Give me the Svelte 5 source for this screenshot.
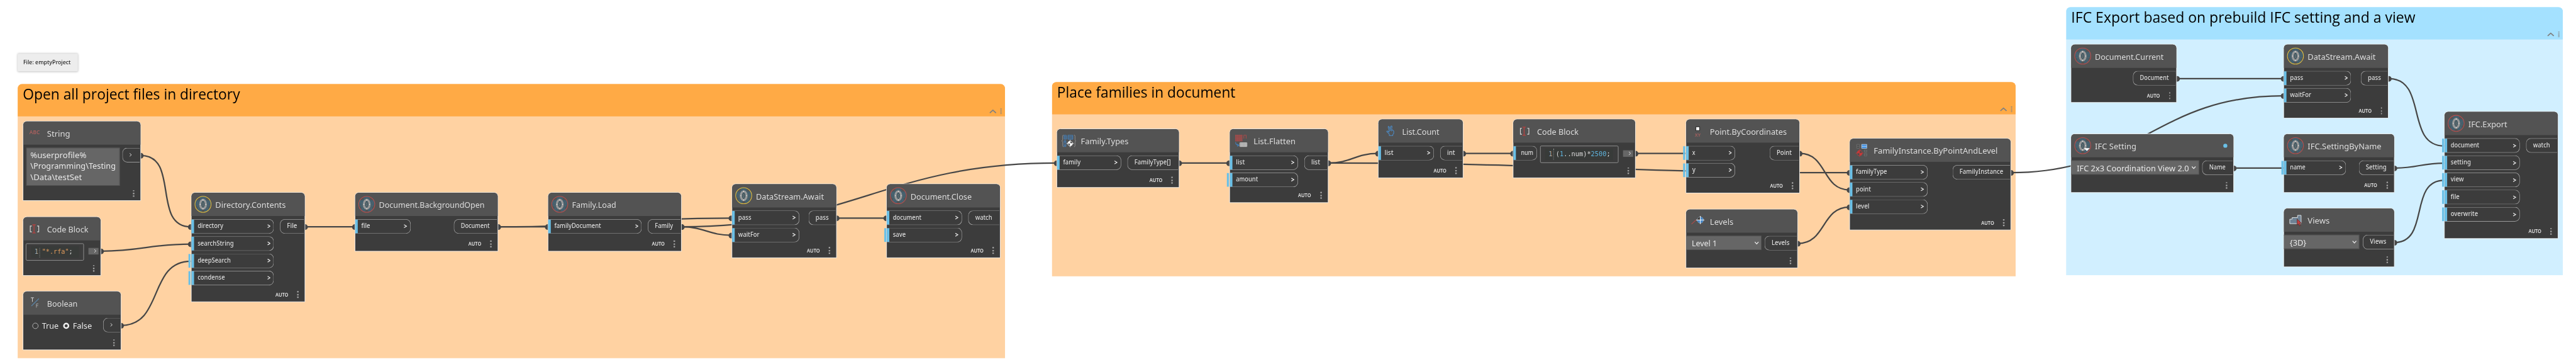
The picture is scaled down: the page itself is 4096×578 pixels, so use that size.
<script>
  // Canvas units; the stage is scaled down to the window.
  const P = (label, w, dflt = false) => ({ label, w, dflt });

  const notes = [{ x: 35, y: 105.5, w: 119, h: 35, text: 'File: emptyProject', tw: 94 }];

  const groups = [
    { x: 35, y: 166, w: 1954, h: 541.7, title: 'Open all project files in directory', tw: 430, kind: 'orange' },
    { x: 2082, y: 162, w: 1907, h: 383.7, title: 'Place families in document', tw: 353, kind: 'orange' },
    { x: 4089, y: 14, w: 983, h: 529.7, title: 'IFC Export based on prebuild IFC setting and a view', tw: 681, kind: 'blue' }
  ];

  const nodes = [
    { id: 'str', x: 44.5, y: 239.3, r: 278.6, h: 157.4, title: 'String', tw: 46, icon: 'abc', text: [['%userprofile%', 111], ['\\Programming\\Testing', 169], ['\\Data\\testSet', 102]], out: P('', 0), ox: 242 },
    { id: 'rfa', x: 44.5, y: 428.3, r: 200, h: 116.4, title: 'Code Block', tw: 82, icon: 'code', code: [['"*.rfa"', 'o'], [';', '']], cw: 115, ctw: 61 },
    { id: 'bool', x: 44.5, y: 575.3, r: 239.7, h: 116.4, title: 'Boolean', tw: 60.5, icon: 'tf', radio: true, out: P('', 0), ox: 203.5 },
    { id: 'dir', x: 377.5, y: 380.3, r: 603.7, h: 216.4, title: 'Directory.Contents', tw: 139.5, icon: 'orchid', ring: 'y', auto: true, ins: [P('directory', 51), P('searchString', 71.5), P('deepSearch', 65.5, true), P('condense', 54, true)], ir: 542, out: P('File', 20), ox: 554 },
    { id: 'bg', x: 702.3, y: 380.3, r: 985.8, h: 116.4, title: 'Document.BackgroundOpen', tw: 209, icon: 'orchid', ring: 'r', auto: true, ins: [P('file', 17.5)], ir: 813, out: P('Document', 57), ox: 898 },
    { id: 'load', x: 1084, y: 380.3, r: 1349.2, h: 116.4, title: 'Family.Load', tw: 87.5, icon: 'orchid', ring: 'r', auto: true, ins: [P('familyDocument', 92.5)], ir: 1270, out: P('Family', 36), ox: 1282 },
    { id: 'await1', x: 1447.5, y: 363, r: 1655.8, h: 146.7, title: 'DataStream.Await', tw: 134.5, icon: 'orchid', ring: 'y', auto: true, ins: [P('pass', 26), P('waitFor', 42)], ir: 1581.5, out: P('pass', 26), ox: 1600 },
    { id: 'close', x: 1754, y: 363, r: 1979.8, h: 146.7, title: 'Document.Close', tw: 121, icon: 'orchid', ring: 'r', auto: true, ins: [P('document', 56.5), P('save', 25.5, true)], ir: 1903.7, out: P('watch', 33.5), ox: 1916 },
    { id: 'types', x: 2091.3, y: 254.3, r: 2333.7, h: 116.4, title: 'Family.Types', tw: 94.5, icon: 'types', auto: true, ins: [P('family', 34.5)], ir: 2219, out: P('FamilyType[]', 72), ox: 2231 },
    { id: 'flat', x: 2432.5, y: 254.3, r: 2628.5, h: 146.4, title: 'List.Flatten', tw: 83, icon: 'flatten', auto: true, ins: [P('list', 17.5), P('amount', 43.5, true)], ir: 2568.8, out: P('list', 17.5), ox: 2581.3 },
    { id: 'count', x: 2727.2, y: 235.3, r: 2895.9, h: 116.4, title: 'List.Count', tw: 73.5, icon: 'count', auto: true, ins: [P('list', 17.5)], ir: 2838, out: P('int', 15.5), ox: 2850 },
    { id: 'num', x: 2994.3, y: 235.3, r: 3236.9, h: 116.4, title: 'Code Block', tw: 82, icon: 'code', ins: [P('num', 24.5)], bare: true, ir: 3042, code: [['(', ''], ['1', 'b'], ['..num)*', ''], ['2500', 'b'], [';', '']], cw: 155, ctw: 108 },
    { id: 'pt', x: 3335.5, y: 235.3, r: 3561.7, h: 146.4, title: 'Point.ByCoordinates', tw: 152, icon: 'point', auto: true, ins: [P('x', 6, true), P('y', 6.5, true)], ir: 3434, out: P('Point', 30), ox: 3502 },
    { id: 'lev', x: 3335.5, y: 413.3, r: 3557.9, h: 116.4, title: 'Levels', tw: 46.5, icon: 'levels', select: 'Level 1', sw: 50, ir: 3486, out: P('Levels', 35.5), ox: 3492 },
    { id: 'inst', x: 3660.3, y: 273.3, r: 3979.9, h: 181.4, title: 'FamilyInstance.ByPointAndLevel', tw: 245.5, icon: 'instance', auto: true, ins: [P('familyType', 61.5), P('point', 29.5), P('level', 26.5)], ir: 3814.7, out: P('FamilyInstance', 86.5), ox: 3864 },
    { id: 'cur', x: 4098.2, y: 87.3, r: 4308.5, h: 116.2, title: 'Document.Current', tw: 136, icon: 'orchid', ring: 'r', auto: true, out: P('Document', 57), ox: 4221 },
    { id: 'set', x: 4098.2, y: 264.3, r: 4420.7, h: 116.4, title: 'IFC Setting', tw: 82, icon: 'orchid', ring: 'r', drop: true, badge: true, select: 'IFC 2x3 Coordination View 2.0', sw: 222, ir: 4352, out: P('Name', 32.5), ox: 4358 },
    { id: 'await2', x: 4519.4, y: 87.3, r: 4727.5, h: 146.4, title: 'DataStream.Await', tw: 134.5, icon: 'orchid', ring: 'y', auto: true, ins: [P('pass', 26), P('waitFor', 42)], ir: 4653.5, out: P('pass', 26), ox: 4672 },
    { id: 'byname', x: 4519.4, y: 264.3, r: 4738.6, h: 116.4, title: 'IFC.SettingByName', tw: 146, icon: 'orchid', ring: 'r', auto: true, ins: [P('name', 30.5, true)], ir: 4643, out: P('Setting', 41), ox: 4668 },
    { id: 'views', x: 4519.4, y: 411.3, r: 4738.6, h: 116.4, title: 'Views', tw: 43.5, icon: 'views', select: '{3D}', sw: 33, ir: 4669.5, out: P('Views', 32.5), ox: 4676 },
    { id: 'exp', x: 4837, y: 220.4, r: 5062.6, h: 251.6, title: 'IFC.Export', tw: 77, icon: 'orchid', ring: 'r', auto: true, ins: [P('document', 56.5, true), P('setting', 40, true), P('view', 26, true), P('file', 17.5, true), P('overwrite', 54, true)], ir: 4986.5, out: P('watch', 33.5), ox: 4999 }
  ];

  const links = [
    ['str', 'dir', 0], ['rfa', 'dir', 1], ['bool', 'dir', 2], ['dir', 'bg', 0],
    ['bg', 'load', 0], ['bg', 'await1', 0], ['load', 'await1', 1], ['load', 'types', 0],
    ['await1', 'close', 0], ['types', 'flat', 0], ['flat', 'count', 0], ['flat', 'inst', 0],
    ['count', 'num', 0], ['num', 'pt', 0], ['pt', 'inst', 1], ['lev', 'inst', 2],
    ['inst', 'await2', 1], ['cur', 'await2', 0], ['set', 'byname', 0],
    ['await2', 'exp', 0], ['byname', 'exp', 1], ['views', 'exp', 2]
  ];

  const byId = Object.fromEntries(nodes.map((n) => [n.id, n]));
  const wires = links.map(([a, b, i]) => {
    const x1 = byId[a].r, y1 = byId[a].y + 68;
    const x2 = byId[b].x, y2 = byId[b].y + 68 + 34 * i;
    const o = 0.45 * Math.hypot(x2 - x1, y2 - y1);
    return { x1, y1, x2, y2, end: !byId[b].ins[i].dflt, d: `M${x1} ${y1}C${x1 + o} ${y1} ${x2 - o} ${y2} ${x2} ${y2}` };
  });

  // Stretches a label horizontally to the width reserved for it.
  function fit(el, w) {
    const natural = parseFloat(getComputedStyle(el).width);
    if (natural > 0) el.style.transform = `scaleX(${w / natural})`;
  }
</script>

{#snippet label(text, w, cls)}
  <span class="label {cls}" style:width="{w}px"><span class="ink" use:fit={w}>{text}</span></span>
{/snippet}

{#snippet gt(w, sw)}
  <svg class="gt" width={w} height="8" viewBox="0 0 {w} 8"><path d="M.6 1L{w - 0.9} 4L.6 7" fill="none" stroke="#e8e8e8" stroke-width={sw} /></svg>
{/snippet}

{#snippet more()}
  <span class="more"><i></i><i></i><i></i></span>
{/snippet}

{#snippet icon(n)}
  <svg class="icon" width="47" height="46" viewBox="1 1 47 46">
    {#if n.icon === 'orchid'}
      <g transform="translate(23.8 23.8)">
        <g fill="#43606f">
          <path d="M-5.5-14.5Q0-17.5 5.5-14.5L7-5L0 0L-7-5Z" />
          <path d="M-15-8L-6-8L-2 1L-9 8Q-17 2-15-8Z" />
          <path d="M15-8L6-8L2 1L9 8Q17 2 15-8Z" />
          <path d="M-10 5L0 1L-3 15Q-11 14-12 9Z" />
          <path d="M10 5L0 1L3 15Q11 14 12 9Z" />
        </g>
        <path d="M-15-8L0 11L15-8M-10 12L0-13L10 12M-14 3L14 3" fill="none" stroke="#6b6663" stroke-width=".6" />
        <ellipse rx="5.6" ry="8.7" fill="#415862" stroke="#999" stroke-width="4" />
        <path d="M-1.8-4L1.5 0L-1.8 5M1.8-4L-1.5 0L1.8 5" fill="none" stroke="#8b8784" stroke-width=".6" />
        <g fill="#fff"><rect x="-.5" y="-9.8" width="1" height="2.4" /><rect x="-.5" y="7.4" width="1" height="2.4" /><rect x="-6.4" y="-.6" width="1.5" height="1.2" /><rect x="4.9" y="-.6" width="1.5" height="1.2" /></g>
        <circle r="15.9" fill="none" stroke={n.ring === 'y' ? '#e3bf3f' : '#b94e4c'} stroke-width="1.3" />
      </g>
      {#if n.drop}<path d="M26 28.8H38L32 34.4Z" fill="#fff" />{/if}
    {:else if n.icon === 'abc'}
      <text x="13.3" y="26.6" font-size="11.2" font-weight="600" textLength="20.4" lengthAdjust="spacingAndGlyphs" fill="#a9605e">ABC</text>
    {:else if n.icon === 'code'}
      <path d="M18 18.6H14.9V30.2H18M28.6 18.6H31.7V30.2H28.6" fill="none" stroke="#ddd" stroke-width="1.4" />
      <path d="M19 16.3H25.6M19 32.4H25.6M22.3 16.3V32.4" fill="none" stroke="#b6413f" stroke-width="1.7" />
    {:else if n.icon === 'tf'}
      <path d="M16 13.5H22.2M19.1 13.5V21.5" fill="none" stroke="#ddd" stroke-width="1.1" />
      <path d="M17.2 29.8L32 15" stroke="#5b8db8" stroke-width="1.3" />
      <path d="M27 33V25.6H31M27 29H30.4" fill="none" stroke="#aaa" stroke-width="1.1" />
    {:else if n.icon === 'types'}
      <path d="M14 12.9Q12 12.9 12 15V22Q12 24 10 24.4Q12 24.8 12 27V34Q12 36 14 36M34.5 12.9Q36.5 12.9 36.5 15V22Q36.5 24 38.3 24.4Q36.5 24.8 36.5 27V34Q36.5 36 34.5 36" fill="none" stroke="#999" stroke-width="1" />
      <path d="M14.8 13.4H19.2V21.2H14.8ZM14.8 16H19.2M14.8 18.7H19.2M22.4 13.4H32.2V21.2H22.4ZM22.4 16H32.2M22.4 18.7H32.2M14.8 24.2H18.4V35.6H14.8ZM14.8 26.6H18.4M14.8 33.2H18.4" fill="none" stroke="#4386c8" stroke-width="1.1" />
      <circle cx="26.9" cy="29.6" r="5.2" fill="#f4f4f4" /><path d="M26.9 29.6V25.4A4.2 4.2 0 0 1 31.1 29.6ZM26.9 29.6V33.8A4.2 4.2 0 0 1 22.7 29.6Z" fill="#444" />
      <path d="M26.9 22.5V36.7M19.8 29.6H34" stroke="#f4f4f4" stroke-width="1.1" />
    {:else if n.icon === 'flatten'}
      <g fill="none" stroke="#b64a49" stroke-width="1.1">
        {#each [0, 1, 2] as row}{#each [0, 1, 2, 3] as col}<rect x={12 + col * 3.6} y={13.2 + row * 4.4} width="2.4" height="2.7" />{/each}{/each}
        <path d="M28.6 20V13.2H33.2V20" />
      </g>
      <path d="M12.3 27Q12.6 33 18 33.2M15.8 30.6L18.6 33.2L15.8 35.6" fill="none" stroke="#4386c8" stroke-width="1.3" />
      <path d="M21 28.2H34.6V35.6H21ZM21 30.7H34.6M21 33.2H34.6M23.7 28.2V35.6M26.4 28.2V35.6M29.1 28.2V35.6M31.8 28.2V35.6" fill="none" stroke="#eee" stroke-width="1" />
    {:else if n.icon === 'count'}
      <path d="M22.5 33V30L17.6 25.2Q17.4 23.6 19.2 24L22 26V22L20.2 16Q20.4 14.3 22 15L24.2 20L25.6 14.4Q27.2 13.2 27.8 14.8L27 21.5L29 22L31.2 24V28.5L29.4 31V33Z M24.2 20V24M27 21.5V24.5" fill="none" stroke="#4c8dca" stroke-width="1.3" stroke-linejoin="round" />
    {:else if n.icon === 'point'}
      <rect x="20.2" y="15.5" width="7.4" height="7.6" fill="#f4f4f4" stroke="#2d2d2d" stroke-width="1.3" />
      <text x="18.4" y="35.4" font-size="9.2" font-weight="600" textLength="11.2" lengthAdjust="spacingAndGlyphs" fill="#a9605e">XY</text>
    {:else if n.icon === 'levels'}
      <path d="M11.5 30L20.8 21.6" stroke="#b64a49" stroke-width="1.3" />
      <circle cx="29" cy="21.8" r="6.3" fill="#3c3c3c" />
      <path d="M29 21.8V15.5A6.3 6.3 0 0 1 35.3 21.8ZM29 21.8V28.1A6.3 6.3 0 0 1 22.7 21.8ZM29 21.8H35.3A6.3 6.3 0 0 1 29 28.1Z" fill="#4386c8" />
      <circle cx="29" cy="21.8" r="6.3" fill="none" stroke="#8fa3b5" stroke-width=".8" />
      <path d="M29 13.8V30M20.8 21.8H37" stroke="#fff" stroke-width="1.2" />
    {:else if n.icon === 'instance'}
      <g fill="#4b4b4b" stroke="#777" stroke-width=".9"><path d="M14.6 12.3H20V20H14.6ZM14.6 16H20M29.6 23.2H34.4V27.8H29.6ZM29.6 25.5H34.4M29.6 30.3H34.4V35.3H29.6ZM29.6 32.8H34.4" /></g>
      <path d="M24.3 12.3H34.4V20.2H24.3Z" fill="#3f8ee0" stroke="#bcd4ea" stroke-width="1" /><path d="M24.3 16.2H34.4" stroke="#bcd4ea" stroke-width="1.2" />
      <circle cx="20.3" cy="29.6" r="5.6" fill="#c63a3a" /><path d="M20.3 29.6V25A4.6 4.6 0 0 1 24.9 29.6ZM20.3 29.6V34.2A4.6 4.6 0 0 1 15.7 29.6Z" fill="#4b4b4b" />
      <path d="M20.3 21.8V37.4M12.5 29.6H28" stroke="#c63a3a" stroke-width="1" />
    {:else if n.icon === 'views'}
      <path d="M12.6 31V22.2H17.2V19H28V14.6H35V31Z" fill="#6e8294" stroke="#e0e4e8" stroke-width="1.2" />
      <path d="M27 21.8V34L29.8 31.6L31.8 35.6L34 34.4L32.2 30.6L35.8 30.2Z" fill="#c03f3e" stroke="#4a2f30" stroke-width=".9" />
    {/if}
  </svg>
{/snippet}

<div class="window">
  <main class="stage">
    {#each notes as n}
      <div class="note" style="left:{n.x}px;top:{n.y}px;width:{n.w}px;height:{n.h}px">{@render label(n.text, n.tw, 'small')}</div>
    {/each}

    {#each groups as g}
      <section class="group {g.kind}" style="left:{g.x}px;top:{g.y}px;width:{g.w}px;height:{g.h}px">
        <header>
          {@render label(g.title, g.tw, 'heading')}
          <span class="tools">
            <svg width="14" height="8" viewBox="0 0 14 8"><path d="M.9 7.2L7 1.6L13.1 7.2" fill="none" stroke="#808080" stroke-width="2.2" /></svg>
            <svg width="4" height="12" viewBox="0 0 4 12"><path d="M2 .4V11.6" stroke="#808080" stroke-width="2.6" stroke-dasharray="1.2 1.2" /></svg>
          </span>
        </header>
      </section>
    {/each}

    <svg class="wires" width="5098" height="720" viewBox="0 0 5098 720">
      {#each wires as w}
        <path d={w.d} />
        <circle cx={w.x1} cy={w.y1 + 0.5} r="5.6" />
        {#if w.end}<circle cx={w.x2} cy={w.y2 + 0.5} r="5.6" />{/if}
      {/each}
    </svg>

    {#each nodes as n}
      <article class="node" style="left:{n.x}px;top:{n.y}px;width:{n.r - n.x}px;height:{n.h}px">
        <header>
          {@render icon(n)}
          {@render label(n.title, n.tw, 'title')}
          {#if n.badge}<span class="badge"></span>{/if}
        </header>
        <div class="body">
          {#if n.ins}
            <div class="ins" style:width="{n.ir - n.x - 1}px">
              {#each n.ins as p}
                <div class="in" class:dflt={p.dflt}>
                  {@render label(p.label, p.w, 'port')}
                  {#if !n.bare}{@render gt(6.5, 1.5)}{/if}
                </div>
              {/each}
            </div>
          {/if}
          {#if n.text}
            <div class="textbox">
              {#each n.text as [line, w]}{@render label(line, w, 'value')}{/each}
            </div>
          {/if}
          {#if n.radio}
            <div class="radios">
              <i class="off"></i>{@render label('True', 33, 'value')}<i class="on"></i>{@render label('False', 38, 'value')}
            </div>
          {/if}
          {#if n.select}
            <div class="select" style:width="{n.ir - n.x - 1}px">
              {@render label(n.select, n.sw, 'value')}
              <svg width="9" height="7" viewBox="0 0 9 7"><path d="M.9 1.2L4.5 5.2L8.1 1.2" fill="none" stroke="#f0f0f0" stroke-width="1.5" /></svg>
            </div>
          {/if}
          {#if n.code}
            <div class="codebox" style:width="{n.cw}px">
              <div class="editor">
                <span class="line">1</span>
                <span class="label" style:width="{n.ctw}px"><span class="ink" use:fit={n.ctw}>{#each n.code as [t, c]}<span class={c}>{t}</span>{/each}</span></span>
              </div>
            </div>
            <div class="codeout">{@render gt(5, 1.1)}</div>
          {/if}
          {#if n.out}
            <div class="out" style:width="{n.r - n.ox - 2}px">
              {#if n.out.label}{@render label(n.out.label, n.out.w, 'port')}{:else}{@render gt(5, 1.1)}{/if}
            </div>
          {/if}
        </div>
        <footer>
          {#if n.auto}{@render label('AUTO', 25.5, 'auto')}{/if}
          {@render more()}
        </footer>
      </article>
    {/each}
  </main>
</div>

<style>
  :global(body) { background: #fff; overflow: hidden; }
  .window { width: 4096px; height: 578px; overflow: hidden; background: #fff; }
  .stage {
    position: relative; width: 5098px; height: 720px;
    transform: scale(0.80345); transform-origin: 0 0;
    font-family: "Noto Sans", "Open Sans", sans-serif; color: #dcdcdc;
  }
  .label { display: block; flex: none; white-space: nowrap; text-align: left; }
  .ink { display: inline-block; transform-origin: 0 50%; white-space: pre; }

  .note {
    position: absolute; box-sizing: border-box; display: flex; align-items: center; padding-left: 10.5px;
    background: #ededed; color: #222; border-radius: 2px; box-shadow: 0 0 4px rgba(0, 0, 0, .28);
  }
  .small { font-size: 12px; line-height: 16px; font-weight: 500; }

  .group { position: absolute; border-radius: 9px 9px 0 0; overflow: hidden; }
  .group header { height: 64px; display: flex; justify-content: space-between; box-sizing: border-box; padding: .5px 6px 0 10px; }
  .orange { background: #ffd2a2; }
  .orange header { background: #ffaa45; }
  .blue { background: #d1efff; }
  .blue header { background: #a4e1ff; }
  .heading { font-family: "Open Sans", "Noto Sans", sans-serif; font-size: 29px; line-height: 38px; color: #000; }
  .tools { align-self: flex-end; display: flex; align-items: center; gap: 7px; padding-bottom: 4.5px; }

  .wires { position: absolute; left: 0; top: 0; }
  .wires path { fill: none; stroke: #464646; stroke-width: 2.8; }
  .wires circle { fill: #464646; }

  .node {
    position: absolute; box-sizing: border-box; display: flex; flex-direction: column;
    border: 1px solid #fff; border-radius: 8px 8px 0 0; background: #3c3c3c;
  }
  .node header { flex: none; height: 46px; display: flex; align-items: center; background: #535353; border-radius: 7px 7px 0 0; }
  .icon { flex: none; display: block; }
  .title { font-size: 16.5px; line-height: 22px; padding-top: 1.5px; }
  .badge { width: 8px; height: 8px; border-radius: 50%; background: #6ac0e7; margin-left: auto; margin-right: 11.5px; }

  .body { display: flex; align-items: flex-start; padding-top: 5.7px; flex: none; }
  .ins { display: flex; flex-direction: column; gap: 5px; flex: none; }
  .in, .out { box-sizing: border-box; height: 29px; display: flex; align-items: center; border: 1px solid #a2a2a2; }
  .in { position: relative; border-left: 0; border-radius: 0 10px 10px 0; justify-content: space-between; padding-right: 6px; }
  .in::before { content: ''; width: 5px; align-self: stretch; background: #6ac0e7; margin-right: 7px; }
  .in .gt { margin-left: auto; }
  .dflt::after { content: ''; position: absolute; left: -5.4px; top: 0; bottom: 0; width: 4px; background: #6ac0e7; }
  .out { border-right: 0; border-radius: 10px 0 0 10px; padding-left: 13px; margin-left: auto; margin-right: 1px; }
  .port { font-size: 12.4px; line-height: 16px; padding-bottom: 1px; font-weight: 500; }
  .gt { display: block; flex: none; }

  .textbox { box-sizing: border-box; width: 185px; height: 75px; margin: .3px 0 0 6px; padding: 1.5px 0 0 7.5px; background: #666; border: 1px solid #525252; overflow: hidden; }
  .value { font-size: 16px; line-height: 22px; color: #e8e8e8; }
  .radios { display: flex; align-items: center; height: 29px; padding: 2px 0 0 18.5px; }
  .radios i { box-sizing: border-box; width: 12px; height: 12px; border-radius: 50%; border: 1px solid #ccc; margin-right: 7px; }
  .radios .on { border: 3.7px solid #f2f2f2; margin-left: 8.5px; }
  .select { box-sizing: border-box; height: 28.5px; display: flex; align-items: center; justify-content: space-between; background: #666; border: 1px solid #525252; border-left: 0; padding: 2px 4.5px 0 11px; }
  .select svg { margin-top: -2px; }
  .codebox { box-sizing: border-box; height: 34px; margin-left: 5.7px; border: 1px solid #a2a2a2; border-radius: 2.5px; padding: 5px 9.5px; }
  .editor { height: 100%; display: flex; align-items: center; background: #383b39; font-family: "DejaVu Sans Mono", "Liberation Mono", monospace; font-size: 12.5px; line-height: 22px; color: #dcdcdc; }
  .line { width: 14px; text-align: right; padding-right: 2px; margin-right: 4px; border-right: 1px dotted #999; color: #aaa; font-size: 12px; }
  .o { color: #e09a5c; }
  .b { color: #5fb3dc; }
  .codeout { box-sizing: border-box; width: 20px; height: 13px; margin: 9px 0 0 9px; background: #666; display: flex; align-items: center; justify-content: flex-end; padding-right: 4px; }

  footer { margin-top: auto; display: flex; align-items: center; justify-content: flex-end; padding: 0 12px 6.5px 0; }
  .auto { font-size: 10px; line-height: 14px; font-weight: 600; margin-right: 17.8px; color: #e4e4e4; }
  .more { display: flex; flex-direction: column; gap: 2.6px; }
  .more i { width: 2.8px; height: 2.8px; border-radius: .8px; background: #a0a0a0; }
</style>
